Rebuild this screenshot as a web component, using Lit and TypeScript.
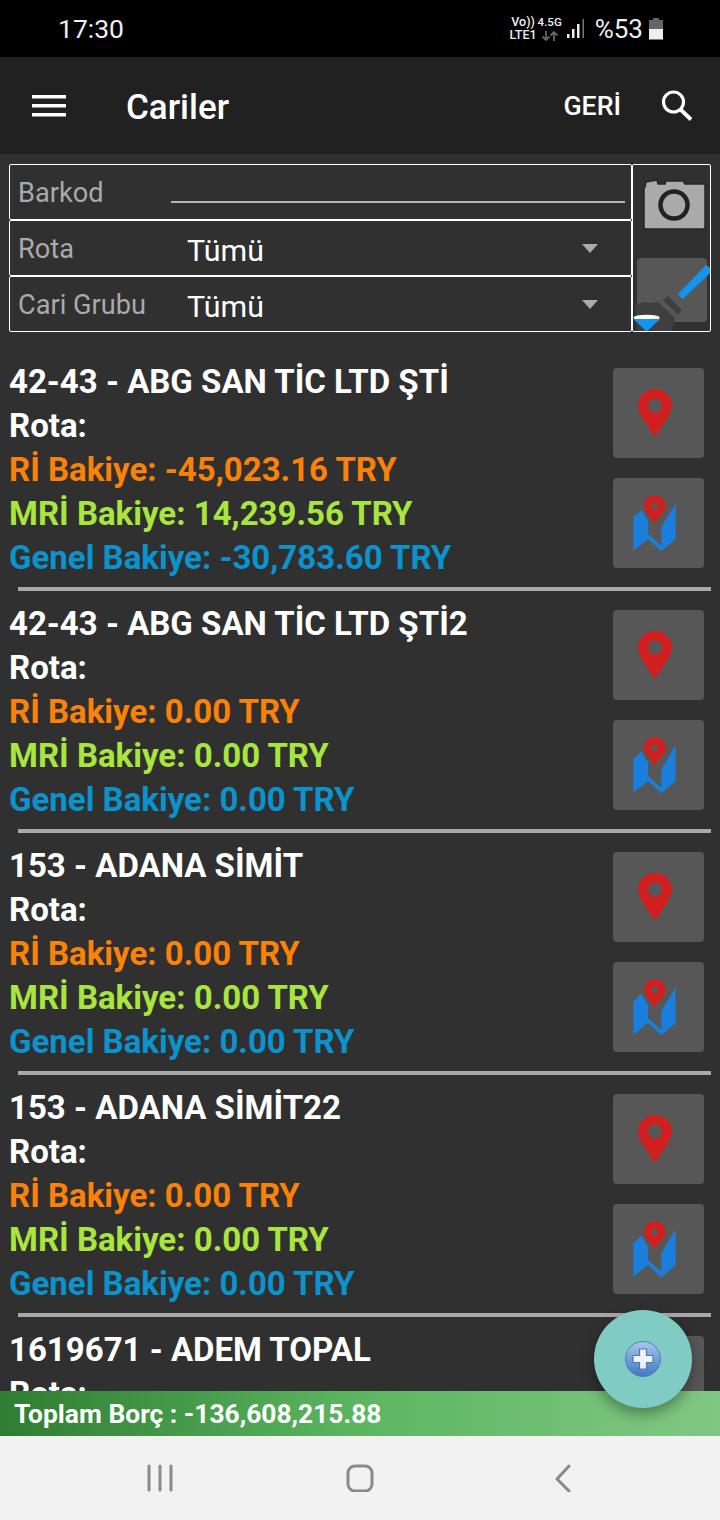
import { LitElement, html, css, svg } from 'lit';
import { customElement } from 'lit/decorators.js';

interface Cari {
  title: string;
  ri: string;
  mri: string;
  genel: string;
}

const CARILER: Cari[] = [
  { title: '42-43 - ABG SAN TİC LTD ŞTİ', ri: '-45,023.16', mri: '14,239.56', genel: '-30,783.60' },
  { title: '42-43 - ABG SAN TİC LTD ŞTİ2', ri: '0.00', mri: '0.00', genel: '0.00' },
  { title: '153 - ADANA SİMİT', ri: '0.00', mri: '0.00', genel: '0.00' },
  { title: '153 - ADANA SİMİT22', ri: '0.00', mri: '0.00', genel: '0.00' },
  { title: '1619671 - ADEM TOPAL', ri: '0.00', mri: '0.00', genel: '0.00' },
];

const pinIcon = svg`<svg width="36" height="50" viewBox="0 0 36 50">
  <path fill="#d11f1f" fill-rule="evenodd" d="M18 1C8.600 1 1 8.400 1 17.600 1 26 11 38 18 49 25 38 35 26 35 17.600 35 8.400 27.400 1 18 1ZM18 10.500a7 7 0 1 1 0 14 7 7 0 0 1 0-14Z"/>
</svg>`;

// coordinates are taken at 3x, hence the large viewBox
const mapIcon = svg`<svg width="43.300" height="58.300" viewBox="100 400 130 175">
  <path fill="#1a7fdc" d="M101 470 125 447 145 480V520L185 555V500L228 428V535L185 572 145 535 101 570Z"/>
  <path fill="#d11f1f" fill-rule="evenodd" d="M165 404C147 404 133 418 133 436 133 452 154 470 165 488 176 470 198 452 198 436 198 418 183 404 165 404ZM165 426a10 10 0 1 1 0 20 10 10 0 0 1 0-20Z"/>
</svg>`;

@customElement('app-root')
export class AppRoot extends LitElement {
  static styles = css`
    :host {
      display: flex;
      flex-direction: column;
      position: relative;
      width: 720px;
      height: 1520px;
      overflow: hidden;
      font-family: Roboto, 'Liberation Sans', sans-serif;
      background: #303030;
      color: #fff;
    }

    .status {
      flex: 0 0 57px;
      display: flex;
      align-items: center;
      background: #000;
      padding: 0 56px 0 58px;
      color: #eee;
    }
    .status .time {
      font-size: 26.5px;
      margin-right: auto;
    }
    .net {
      display: flex;
      flex-direction: column;
      align-items: center;
      font-size: 12.5px;
      line-height: 12.5px;
      font-weight: 500;
    }
    .net.gen {
      margin-left: 1px;
      font-size: 11.5px;
    }
    .net svg {
      display: block;
      margin-top: 2px;
    }
    .signal {
      margin: 0 10px 0 5px;
    }
    .percent {
      font-size: 26px;
      margin-right: 5px;
    }

    .appbar {
      flex: 0 0 97px;
      display: flex;
      align-items: center;
      background: #212121;
      padding: 0 27px 0 32px;
    }
    .appbar .title {
      margin-left: 60px;
      font-size: 35px;
      font-weight: 500;
      margin-right: auto;
      position: relative;
      top: 2px;
    }
    .appbar .back {
      font-size: 26.700px;
      font-weight: 500;
      margin-right: 40px;
    }

    .main {
      flex: 1;
      min-height: 0;
      overflow: hidden;
    }

    .filters {
      display: flex;
      margin: 10px 9px 28px;
      height: 168px;
    }
    .fields {
      flex: 1;
      display: flex;
      flex-direction: column;
    }
    .field {
      box-sizing: border-box;
      flex: 0 0 56px;
      display: flex;
      align-items: center;
      border: 1px solid #fff;
      border-radius: 2px;
      padding-left: 8px;
    }
    .field label {
      flex: 0 0 162px;
      font-size: 27.200px;
      color: #aaa;
      position: relative;
      top: 1px;
    }
    .field.barkod .line {
      flex: 1;
      height: 2px;
      margin: 20px 6px 0 -9px;
      background: #b5b5b5;
    }
    .field .value {
      flex: 1;
      padding-left: 7px;
      font-size: 30.400px;
      position: relative;
      top: 2px;
    }
    .field .arrow {
      width: 0;
      height: 0;
      margin-right: 33px;
      border-left: 8.500px solid transparent;
      border-right: 8.500px solid transparent;
      border-top: 9px solid #aaa;
    }
    .tools {
      box-sizing: border-box;
      flex: 0 0 79px;
      display: flex;
      flex-direction: column;
      border: 1px solid #fff;
      border-radius: 2px;
      overflow: hidden;
    }
    .tools svg {
      display: block;
    }

    .item {
      box-sizing: border-box;
      height: 242px;
      display: flex;
      justify-content: space-between;
      padding: 0 16px 0 9px;
      position: relative;
    }
    .item::after {
      content: '';
      position: absolute;
      left: 18px;
      right: 9px;
      top: 227px;
      height: 3.500px;
      background: #a8a8a8;
    }
    .lines {
      font-size: 33px;
      font-weight: 700;
      line-height: 44px;
    }
    .ri {
      color: #fb8208;
    }
    .mri {
      color: #a8e63f;
    }
    .genel {
      color: #0b93cd;
    }
    .actions {
      display: flex;
      flex-direction: column;
      gap: 20px;
      padding-top: 8px;
    }
    .btn {
      width: 91px;
      height: 90px;
      display: flex;
      align-items: center;
      justify-content: center;
      background: #575757;
      border-radius: 4px;
    }
    .btn svg {
      margin-right: 7px;
    }

    .total {
      flex: 0 0 45px;
      display: flex;
      align-items: center;
      padding-left: 14px;
      font-size: 26.400px;
      font-weight: 700;
      background: linear-gradient(to right, #2e7d32, #5cb660 50%, #81c784);
    }

    .fab {
      position: absolute;
      left: 594px;
      top: 1310px;
      width: 98px;
      height: 98px;
      display: flex;
      align-items: center;
      justify-content: center;
      border-radius: 50%;
      background: #80cbc4;
      box-shadow: 0 6px 14px rgba(0, 0, 0, 0.35);
    }

    .nav {
      flex: 0 0 84px;
      display: flex;
      align-items: center;
      justify-content: space-between;
      background: #f2f2f2;
      padding: 0 147px;
    }
    .nav .home {
      margin-right: 6px;
    }
  `;

  renderItem(c: Cari) {
    return html`
      <div class="item">
        <div class="lines">
          <div>${c.title}</div>
          <div>Rota:</div>
          <div class="ri">Rİ Bakiye: ${c.ri} TRY</div>
          <div class="mri">MRİ Bakiye: ${c.mri} TRY</div>
          <div class="genel">Genel Bakiye: ${c.genel} TRY</div>
        </div>
        <div class="actions">
          <div class="btn">${pinIcon}</div>
          <div class="btn">${mapIcon}</div>
        </div>
      </div>
    `;
  }

  render() {
    return html`
      <div class="status">
        <span class="time">17:30</span>
        <div class="net"><span>Vo))</span><span>LTE1</span></div>
        <div class="net gen">
          <span>4.5G</span>
          <svg width="18" height="10" viewBox="0 0 18 10" fill="none" stroke="#666" stroke-width="1.800">
            <path d="M5 0V9M1.500 5.500 5 9 8.500 5.500M13 10V1M9.500 4.500 13 1 16.500 4.500" />
          </svg>
        </div>
        <svg class="signal" width="18" height="22" viewBox="0 0 18 22">
          <rect x="0" y="16" width="2.500" height="4" fill="#eee" />
          <rect x="5" y="11" width="2.500" height="9" fill="#eee" />
          <rect x="10" y="6" width="2.500" height="14" fill="#eee" />
          <rect x="15.500" y="1" width="1.500" height="19" fill="#777" />
        </svg>
        <span class="percent">%53</span>
        <svg width="16" height="22" viewBox="0 0 16 22">
          <path d="M5 0H11V2H15V11H1V2H5Z" fill="#666" />
          <path d="M1 11H15V21.500H1Z" fill="#eee" />
        </svg>
      </div>

      <div class="appbar">
        <svg width="34" height="22" viewBox="0 0 34 22">
          <rect y="0" width="34" height="3.500" fill="#fff" />
          <rect y="9" width="34" height="3.500" fill="#fff" />
          <rect y="18" width="34" height="3.500" fill="#fff" />
        </svg>
        <span class="title">Cariler</span>
        <span class="back">GERİ</span>
        <svg width="32" height="31" viewBox="0 0 32 31" fill="none" stroke="#fff">
          <circle cx="12.500" cy="12" r="10" stroke-width="3.200" />
          <path d="M19.500 19.500 30 29.500" stroke-width="3.800" />
        </svg>
      </div>

      <div class="main">
        <div class="filters">
          <div class="fields">
            <div class="field barkod"><label>Barkod</label><div class="line"></div></div>
            <div class="field"><label>Rota</label><div class="value">Tümü</div><div class="arrow"></div></div>
            <div class="field"><label>Cari Grubu</label><div class="value">Tümü</div><div class="arrow"></div></div>
          </div>
          <div class="tools">
            <svg width="77" height="166" viewBox="0 0 77 166">
              <path fill="#aaa" stroke="#262626" stroke-width="1.500" d="M12 22 13 17 24 15 25 19 32 19 33 16 50 16 52 19 71 19Q72 19 72 21V62Q72 64 70 64H13Q11 64 11 62V24Q11 22 12 22Z" />
              <circle cx="41" cy="40" r="13.500" fill="#aaa" stroke="#222" stroke-width="4.500" />
              <rect x="4" y="93" width="70" height="64" rx="4" fill="#575757" />
              <path d="M44.700 129.300 73 100 77.300 103V108L49.700 134Z" fill="#1494ee" />
              <path d="M2 140Q10 136 17 138L25 137 42 153 38.700 167H3.700Z" fill="#3f3f3f" />
              <path d="M30 135 35 131 48.700 145 45 150Z" fill="#3f3f3f" />
              <ellipse cx="13.700" cy="152.700" rx="13" ry="3" fill="#fff" />
              <path d="M0.300 154H27L13.700 166.700Z" fill="#1494ee" />
            </svg>
          </div>
        </div>
        ${CARILER.map((c) => this.renderItem(c))}
      </div>

      <div class="total">Toplam Borç : -136,608,215.88</div>

      <div class="nav">
        <svg width="26" height="28" viewBox="0 0 26 28">
          <path d="M2 2V26M13 2V26M24 2V26" stroke="#8a8a8a" stroke-width="3" stroke-linecap="round" fill="none" />
        </svg>
        <svg class="home" width="28" height="28" viewBox="0 0 28 28">
          <rect x="2" y="2" width="24" height="25" rx="7" stroke="#8a8a8a" stroke-width="3" fill="none" />
        </svg>
        <svg width="20" height="28" viewBox="0 0 20 28">
          <path d="M16 2 4 15 16 27" stroke="#8a8a8a" stroke-width="3" stroke-linecap="round" stroke-linejoin="round" fill="none" />
        </svg>
      </div>

      <div class="fab">
        <svg width="38" height="38" viewBox="0 0 38 38">
          <defs>
            <linearGradient id="b" x1="0" y1="0" x2="0" y2="1">
              <stop offset="0" stop-color="#a9c8ea" />
              <stop offset="1" stop-color="#3f78c4" />
            </linearGradient>
          </defs>
          <circle cx="19" cy="19" r="17.500" fill="url(#b)" stroke="#4d7fbe" stroke-width="1" />
          <path d="M15.500 9H22.500V15.500H29V22.500H22.500V29H15.500V22.500H9V15.500H15.500Z" fill="#eef2fb" stroke="#4f79b3" stroke-width="1.200" />
        </svg>
      </div>
    `;
  }
}
